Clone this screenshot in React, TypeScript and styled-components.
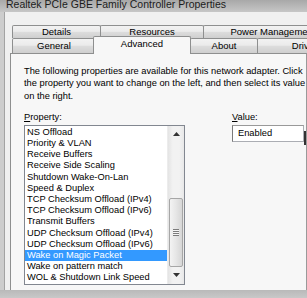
import React from "react";
import styled, { createGlobalStyle } from "styled-components";

const Global = createGlobalStyle`
  html, body { margin: 0; padding: 0; background: #f0f0f0; overflow: hidden; }
  body { font-family: "Liberation Sans", Arial, sans-serif; color: #000; }
`;

const Window = styled.div`
  width: 307px;
  height: 298px;
  display: flex;
  flex-direction: column;
  overflow: hidden;
  background: #f0f0f0;
`;

const TitleBar = styled.div`
  height: 12px;
  flex: none;
  display: flex;
  align-items: flex-end;
  padding-left: 6px;
  overflow: hidden;
  background: linear-gradient(#a8a8a8, #c6c6c6);
`;

const TitleText = styled.span`
  font-size: 10.5px;
  line-height: 1;
  margin-bottom: 3px;
  white-space: nowrap;
  color: #1c1c1c;
`;

const Body = styled.div`
  flex: 1;
  display: flex;
  min-height: 0;
`;

const FrameEdge = styled.div`
  width: 4px;
  flex: none;
  background: #cdcdcd;
  border-right: 1px solid #a3a3a3;
`;

const Client = styled.div`
  flex: 1;
  display: flex;
  flex-direction: column;
  padding: 13px 0 0 5px;
  min-width: 0;
`;

const TabRow = styled.div<{ $h: number }>`
  display: flex;
  height: ${(p) => p.$h}px;
  align-items: flex-end;
  padding-left: 2px;
  flex: none;
  white-space: nowrap;
`;

const Tab = styled.div<{ $w: number; $h: number }>`
  flex: none;
  width: ${(p) => p.$w}px;
  height: ${(p) => p.$h}px;
  box-sizing: border-box;
  border: 1px solid #8e8f8f;
  border-bottom: none;
  margin-right: -1px;
  border-radius: 2px 2px 0 0;
  background: linear-gradient(#f2f2f2 0%, #ebebeb 45%, #dddddd 50%, #cfcfcf 100%);
  font-size: 9.5px;
  line-height: ${(p) => p.$h - 2}px;
  text-align: center;
  overflow: hidden;
  color: #000;
`;

const ActiveTab = styled(Tab)`
  position: relative;
  z-index: 1;
  margin: 0 -1px -1px -2px;
  background: #f7f7f7;
  line-height: ${(p) => p.$h - 4}px;
`;

const Panel = styled.div`
  flex: 1;
  border: 1px solid #8e8f8f;
  border-right-color: #9a9a9a;
  border-bottom: none;
  background: #f7f7f7;
  padding: 11px 0 0 13px;
  display: flex;
  flex-direction: column;
  min-height: 0;
`;

const Description = styled.div`
  font-size: 9.3px;
  line-height: 12.3px;
  white-space: nowrap;
`;

const Columns = styled.div`
  display: grid;
  grid-template-columns: 161px 1fr;
  column-gap: 47px;
  margin-top: 10px;
`;

const Field = styled.div`
  display: flex;
  flex-direction: column;
`;

const Label = styled.div`
  font-size: 9.3px;
  line-height: 11px;
  height: 13px;
  u { text-decoration-thickness: 1px; text-underline-offset: 1px; }
`;

const ListBox = styled.div`
  height: 160px;
  box-sizing: border-box;
  border: 1px solid #828790;
  background: #fff;
  display: flex;
`;

const Items = styled.div`
  flex: 1;
  padding-top: 1px;
  display: flex;
  flex-direction: column;
`;

const Item = styled.div<{ $sel?: boolean }>`
  height: 11.2px;
  line-height: 11.2px;
  font-size: 9.3px;
  padding-left: 2px;
  white-space: nowrap;
  overflow: hidden;
  background: ${(p) => (p.$sel ? "#3399ff" : "transparent")};
  color: ${(p) => (p.$sel ? "#fff" : "#000")};
`;

const ScrollBar = styled.div`
  width: 16px;
  flex: none;
  display: flex;
  flex-direction: column;
  background: linear-gradient(90deg, #e4e4e4, #f2f2f2 30%, #f2f2f2 70%, #e8e8e8);
  border-left: 1px solid #ececec;
`;

const ArrowBtn = styled.div`
  height: 17px;
  flex: none;
  display: flex;
  align-items: center;
  justify-content: center;
`;

const Track = styled.div`
  flex: 1;
  display: flex;
  flex-direction: column;
  justify-content: flex-end;
`;

const Thumb = styled.div`
  height: 69px;
  margin: 0 1px;
  box-sizing: border-box;
  border: 1px solid #a6a6a6;
  border-radius: 2px;
  background: linear-gradient(90deg, #f3f3f3, #e6e6e6 50%, #d6d6d6);
  display: flex;
  align-items: center;
  justify-content: center;
`;

const Grip = styled.div`
  width: 6px;
  height: 7px;
  background: repeating-linear-gradient(#7c7c7c 0 1px, #f6f6f6 1px 2px);
`;

const ValueRow = styled.div`
  display: flex;
  align-items: flex-start;
`;

const ValueBox = styled.div`
  width: 72px;
  height: 17px;
  box-sizing: border-box;
  border: 1px solid #abadb3;
  border-left-color: #7a7a7a;
  border-top-color: #999;
  background: #fff;
  font-size: 9.3px;
  line-height: 15px;
  padding-left: 5px;
  white-space: nowrap;
`;

const Caret = styled.div`
  width: 2px;
  height: 14px;
  margin-top: 6px;
  background: #333;
`;

const BottomBand = styled.div`
  height: 8px;
  flex: none;
  background: linear-gradient(#b9b9b9, #c8c8c8);
`;

const items = [
  "NS Offload",
  "Priority & VLAN",
  "Receive Buffers",
  "Receive Side Scaling",
  "Shutdown Wake-On-Lan",
  "Speed & Duplex",
  "TCP Checksum Offload (IPv4)",
  "TCP Checksum Offload (IPv6)",
  "Transmit Buffers",
  "UDP Checksum Offload (IPv4)",
  "UDP Checksum Offload (IPv6)",
  "Wake on Magic Packet",
  "Wake on pattern match",
  "WOL & Shutdown Link Speed",
];

const UpArrow = () => (
  <svg width="7" height="4" viewBox="0 0 7 4">
    <path d="M0 4 L3.5 0 L7 4 Z" fill="#333" />
  </svg>
);
const DownArrow = () => (
  <svg width="7" height="4" viewBox="0 0 7 4">
    <path d="M0 0 L3.5 4 L7 0 Z" fill="#333" />
  </svg>
);

export default function App() {
  return (
    <>
      <Global />
      <Window>
        <TitleBar>
          <TitleText>Realtek PCIe GBE Family Controller Properties</TitleText>
        </TitleBar>
        <Body>
          <FrameEdge />
          <Client>
            <TabRow $h={13}>
              <Tab $w={89} $h={13}>Details</Tab>
              <Tab $w={104} $h={13}>Resources</Tab>
              <Tab $w={140} $h={13}>Power Management</Tab>
            </TabRow>
            <TabRow $h={15}>
              <Tab $w={84} $h={15}>General</Tab>
              <ActiveTab $w={98} $h={18}>Advanced</ActiveTab>
              <Tab $w={68} $h={15}>About</Tab>
              <Tab $w={95} $h={15}>Driver</Tab>
            </TabRow>
            <Panel>
              <Description>
                The following properties are available for this network adapter. Click
                <br />
                the property you want to change on the left, and then select its value
                <br />
                on the right.
              </Description>
              <Columns>
                <Field>
                  <Label>
                    <u>P</u>roperty:
                  </Label>
                  <ListBox>
                    <Items>
                      {items.map((t) => (
                        <Item key={t} $sel={t === "Wake on Magic Packet"}>
                          {t}
                        </Item>
                      ))}
                    </Items>
                    <ScrollBar>
                      <ArrowBtn>
                        <UpArrow />
                      </ArrowBtn>
                      <Track>
                        <Thumb>
                          <Grip />
                        </Thumb>
                      </Track>
                      <ArrowBtn>
                        <DownArrow />
                      </ArrowBtn>
                    </ScrollBar>
                  </ListBox>
                </Field>
                <Field>
                  <Label>
                    <u>V</u>alue:
                  </Label>
                  <ValueRow>
                    <ValueBox>Enabled</ValueBox>
                    <Caret />
                  </ValueRow>
                </Field>
              </Columns>
            </Panel>
          </Client>
        </Body>
        <BottomBand />
      </Window>
    </>
  );
}
